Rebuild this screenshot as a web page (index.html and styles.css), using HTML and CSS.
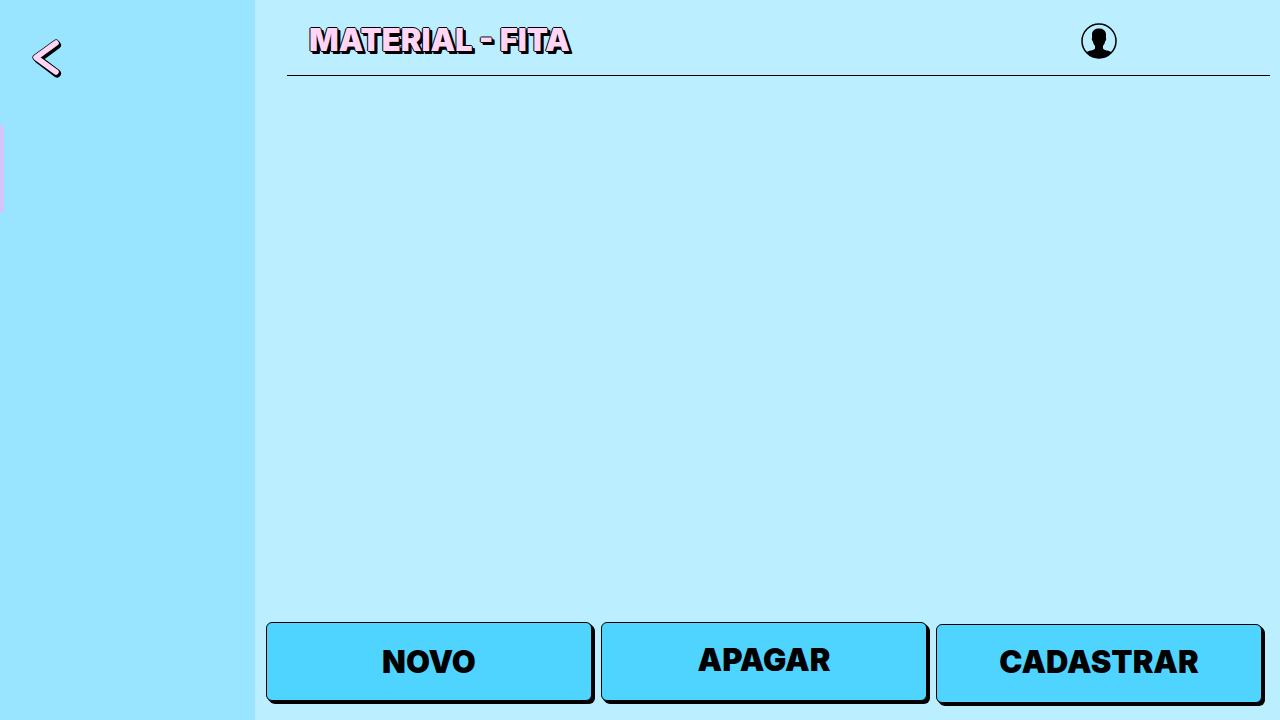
FILE: index.html
```html
<!DOCTYPE html>
<html lang="pt-BR">
<head>
<meta charset="utf-8">
<meta name="viewport" content="width=device-width, initial-scale=1">
<title>Material - Fita</title>
<link rel="stylesheet" href="styles.css">
</head>
<body>
<div class="app">
  <aside class="sidebar">
    <a class="back" href="#" aria-label="Voltar">
      <svg width="32" height="42" viewBox="0 0 32 42" fill="none" stroke-linecap="round" stroke-linejoin="round">
        <path d="M26 8 L7 22 L26 36.500" stroke="#000" stroke-width="8"/>
        <path d="M25 6 L5 20.500 L25 35" stroke="#000" stroke-width="7"/>
        <path d="M25 6 L5 20.500 L25 35" stroke="#ffd6f6" stroke-width="5.500"/>
      </svg>
    </a>
    <div class="marker"></div>
  </aside>
  <main class="main">
    <header class="header">
      <h1 class="title">MATERIAL - FITA</h1>
      <button class="profile" type="button" aria-label="Perfil">
        <svg width="36" height="36" viewBox="0 0 36 36">
          <circle cx="18" cy="18" r="17" fill="none" stroke="#000" stroke-width="1.500"/>
          <path d="M18 5.500 C21.500 5.500 25 7.200 25 11.500 L24.900 15 C25.500 15.400 25.200 17.700 24.200 18.200 C23.700 20.300 23 21.700 22 22.800 L22 25.500 C23.200 27.500 28.500 27.600 30.700 29.200 C27.500 33 23 35.200 18 35.200 C13 35.200 8.500 33 5.300 29.200 C7.500 27.600 12.800 27.500 14 25.500 L14 22.800 C13 21.700 12.300 20.300 11.800 18.200 C10.800 17.700 10.500 15.400 11.100 15 L11 11.500 C11 7.200 14.500 5.500 18 5.500 Z"/>
        </svg>
      </button>
    </header>
    <section class="content"></section>
    <footer class="actions">
      <button class="action" type="button">NOVO</button>
      <button class="action action-raised" type="button">APAGAR</button>
      <button class="action action-last" type="button">CADASTRAR</button>
    </footer>
  </main>
</div>
</body>
</html>
```
FILE: styles.css
```css
* {
  box-sizing: border-box;
}

body {
  margin: 0;
  background: #bbeeff;
  color: #000;
  font-family: Inter, Lato, sans-serif;
}

.app {
  display: flex;
  min-height: 100vh;
}

.sidebar {
  flex: 0 0 255px;
  background: #99e4ff;
}

.back {
  display: block;
  width: 32px;
  margin: 37px 0 0 31px;
}

.back svg,
.profile svg {
  display: block;
}

.marker {
  width: 4px;
  height: 88px;
  margin-top: 46px;
  border-radius: 0 4px 4px 0;
  background: #d4c4fa;
}

.main {
  display: flex;
  flex: 1;
  flex-direction: column;
  min-width: 0;
}

.header {
  display: flex;
  align-items: center;
  justify-content: space-between;
  height: 76px;
  margin: 0 10px 0 32px;
  padding: 6px 153px 0 22px;
  border-bottom: 1px solid #000;
}

.title {
  margin: 0;
  padding-bottom: 2px;
  color: #ffd6f6;
  font-size: 31px;
  font-weight: 900;
  line-height: 40px;
  text-shadow: -1px 0 0 #000, 0 -1px 0 #000, 1px 0 0 #000, 0 1px 0 #000,
    1px 1px 0 #000, 2px 2px 0 #000, 3px 2px 0 #000, 2px 3px 0 #000, 3px 3px 0 #000;
}

.profile {
  padding: 0;
  border: 0;
  background: none;
}

.content {
  flex: 1;
}

.actions {
  display: grid;
  grid-template-columns: repeat(3, 1fr);
  gap: 9px;
  padding: 0 18px 17px 11px;
}

.action {
  height: 79px;
  margin-bottom: 2px;
  padding: 0;
  border: 1px solid #000;
  border-radius: 6px;
  background: #4fd4ff;
  box-shadow: 1px 1px 0 #000, 2px 2px 0 #000, 3px 3px 0 #000;
  color: #000;
  font: inherit;
  font-size: 31px;
  font-weight: 900;
  line-height: 40px;
}

.action-raised {
  padding-bottom: 4px;
}

.action-last {
  margin: 2px 0 0;
  padding-bottom: 4px;
}
```
